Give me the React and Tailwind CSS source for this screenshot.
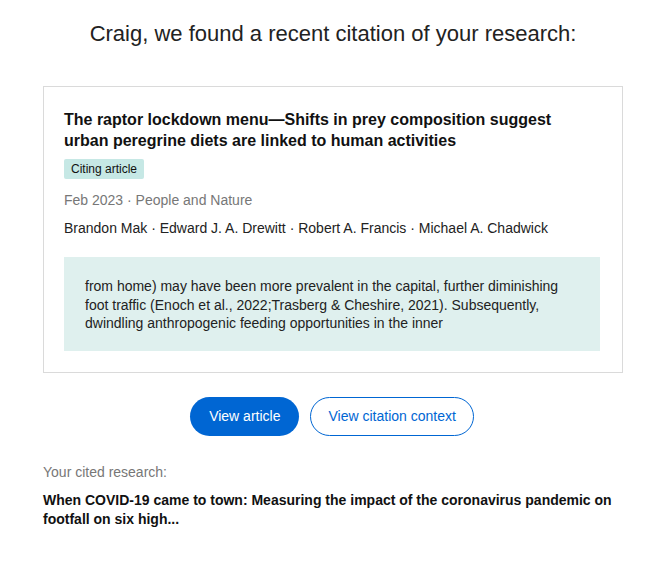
export default function App() {
  return (
    <div className="w-[645px] h-[566px] bg-white font-['Liberation_Sans',Arial,sans-serif] text-[#222]">
      <div className="pl-[43px] w-[623px]">
        <h1 className="pt-[22px] text-center text-[22px] leading-[24px] font-normal text-[#222]">
          Craig, we found a recent citation of your research:
        </h1>
        <div className="mt-[40px] border border-[#dadada] pl-[20px] pr-[22px] pt-[22px] pb-[21px]">
          <div className="pr-[10px] text-[16px] leading-[21px] font-bold text-[#111]">
            The raptor lockdown menu—Shifts in prey composition suggest urban peregrine diets are linked to human activities
          </div>
          <div className="mt-[8px] flex">
            <span className="bg-[#c6e8e5] rounded-[2px] px-[7px] h-[20px] flex items-center text-[12px] text-[#111]">
              Citing article
            </span>
          </div>
          <div className="mt-[11px] text-[14px] leading-[20px] text-[#777]">
            Feb 2023 · People and Nature
          </div>
          <div className="mt-[8px] text-[14px] leading-[20px] text-[#222]">
            Brandon Mak · Edward J. A. Drewitt · Robert A. Francis · Michael A. Chadwick
          </div>
          <div className="mt-[19px] bg-[#dff0ee] px-[21px] pt-[20px] pb-[18px] text-[14px] leading-[18.5px] text-[#222]">
            from home) may have been more prevalent in the capital, further diminishing foot traffic (Enoch et al., 2022;Trasberg &amp; Cheshire, 2021). Subsequently, dwindling anthropogenic feeding opportunities in the inner
          </div>
        </div>
        <div className="mt-[24px] pr-[2px] flex justify-center gap-[11px]">
          <button className="h-[39px] px-[19px] rounded-full bg-[#0066d3] text-white text-[14px]">
            View article
          </button>
          <button className="h-[39px] px-[17px] rounded-full border border-[#0066d3] text-[#0066d3] text-[14px] bg-white">
            View citation context
          </button>
        </div>
        <div className="mt-[27px] text-[14px] leading-[18px] text-[#777]">Your cited research:</div>
        <div className="mt-[10px] text-[14px] leading-[19px] font-bold text-[#111]">
          When COVID-19 came to town: Measuring the impact of the coronavirus pandemic on footfall on six high...
        </div>
      </div>
    </div>
  );
}
